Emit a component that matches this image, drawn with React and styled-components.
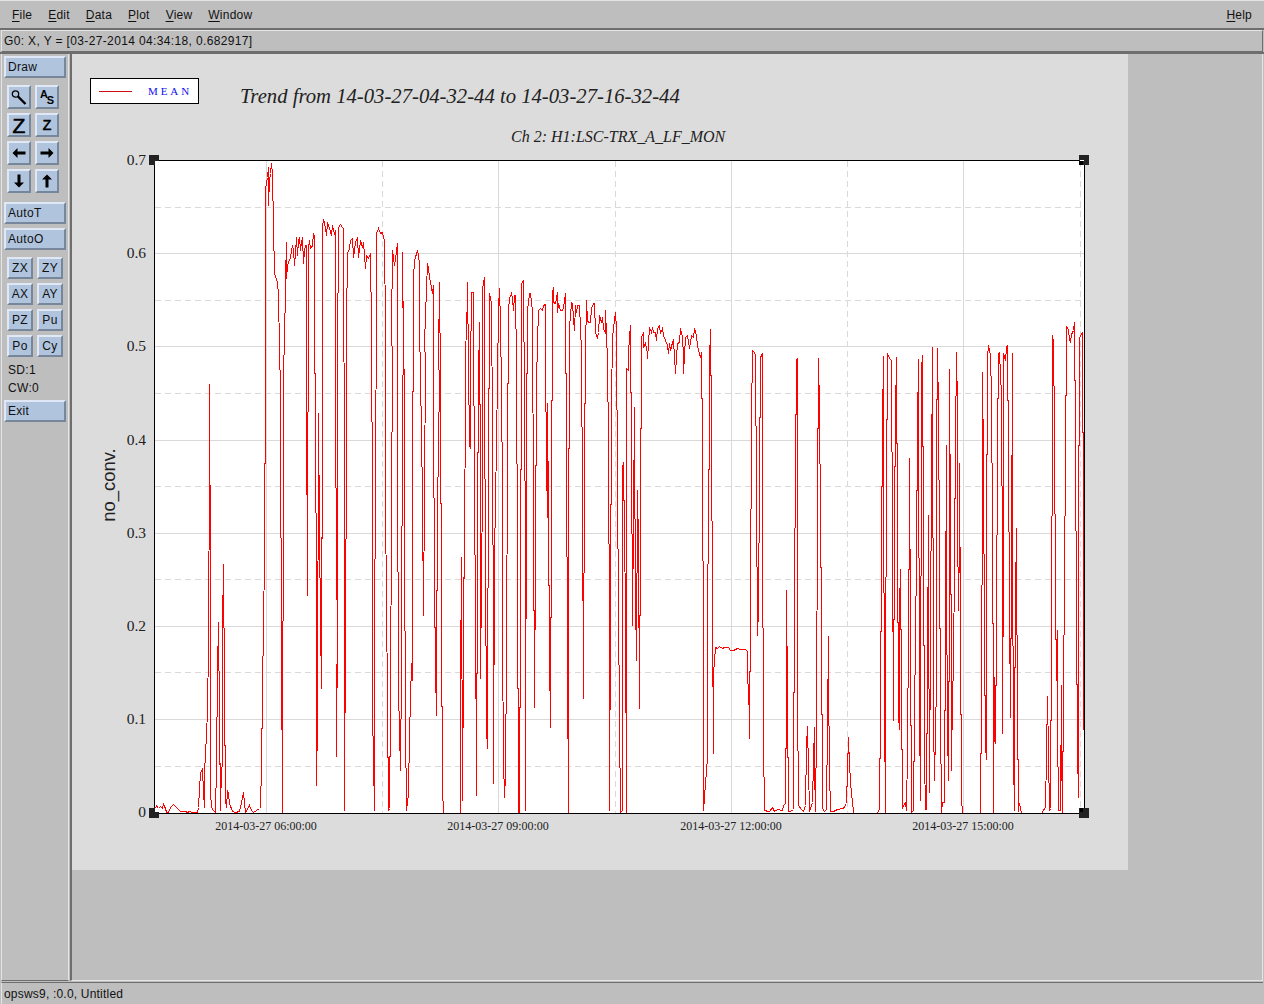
import React from 'react';
import styled, { createGlobalStyle } from 'styled-components';

const Global = createGlobalStyle`
  html, body { margin: 0; padding: 0; background: #bebebe; }
  * { box-sizing: border-box; }
`;

const O = { z3: [140, 150, 1 / 3], z9: [150, 360, 1 / 3], z7: [450, 260, 1 / 3], z10: [450, 360, 1 / 3], z11: [740, 340, 1 / 3], z8: [1000, 300, 0.338] };
const TRACE = [
  ['z9', '15,1345 18,1334 24,1345 30,1338 36,1345 39,1333 45,1345 48,1356 54,1356 60,1342 70,1333 78,1340 90,1352 105,1352 110,1356 118,1352 125,1356 140,1356 145,1340 148,1285 150,1240 155,1225 158,1295 161,1340 163,1235 167,1125 170,1050 172,1080 174,830 176,325 178,72 179,660 181,1295 184,1340 190,1350 196,1356 199,1215 202,930 205,785 207,1068 209,1350 211,1210 213,1280 215,1165 217,800 220,612 222,985 224,1320 228,1340 231,1290 235,1300 238,1330 245,1352 255,1356 268,1352 274,1325 278,1296 281,1325 285,1356 297,1335 303,1350 310,1356 327,1345 330,1340 333,1215 335,1000 338,780 341,610 344,30'],
  ['z3', '376,115 381,80 383,50 385,165 388,90 391,70 394,40 397,70 400,230 402,370 405,378 411,395 413,435 417,595 419,720'],
  ['z9', '390,212 392,850 396,1358 396,850 398,720 400,0'],
  ['z3', '431,600 435,385 437,275 438,385 440,345 444,335 450,320 456,285 460,300 463,345 466,305 469,260 472,315 475,270 478,260 480,300 484,275 487,260 490,340 491,300 494,285 497,285 497,545 499,720'],
  ['z9', '472,705'],
  ['z3', '505,295 507,270 510,295 513,290 516,285 519,250 522,258 523,670'],
  ['z9', '496,40 497,860 499,1275 501,1070 505,160 508,515 510,780 512,985 513,780 515,300'],
  ['z3', '545,225 548,210 552,215 556,235 558,255 562,218 565,225 568,235 572,255 576,225 579,240 582,250 584,240 584,485'],
  ['z9', '556,100 558,645 560,790 559,1190 562,645'],
  ['z3', '592,635 595,230 600,222 605,230 608,235 609,550 611,720'],
  ['z9', '583,1350 585,790 587,300'],
  ['z3', '618,520 622,310 627,295 630,270 635,265 640,320 645,275 650,262 655,320 660,270 665,290 670,275 675,355 678,315 685,325 690,310 692,535'],
  ['z9', '665,450 667,1050 671,1350 673,1040 675,180 679,0'],
  ['z3', '709,250 715,235 720,250 727,245 730,260 733,270 735,528'],
  ['z9', '706,430 710,1020 713,1350 718,1345 720,1045 723,445 725,0'],
  ['z3', '753,540 757,300 760,320 763,345 765,325 770,280 772,277'],
  ['z9', '742,260 745,990 749,1230 752,930 757,90 759,0'],
  ['z3', '787,305 789,590 792,720'],
  ['z9', '762,530 765,1085 768,1350 775,1300 778,1125 782,910 785,960 787,190 790,0'],
  ['z3', '820,380 823,330 830,300 833,315 836,340 838,510 841,700'],
  ['z9', '813,200 817,430 820,765 822,395 824,0'],
  ['z3', '853,580 858,415 860,340 865,350 868,380 872,410 876,430 878,405'],
  ['z9', '848,150 851,665 855,930 857,1065 859,945 862,450 866,60'],
  ['z3', '895,625 898,395 900,690'],
  ['z9', '871,60 874,780 877,1285 878,1362 929,1362 930,975 932,590 934,770 936,1135 937,1320 938,900 941,420 944,235'],
  ['z7', '46,285 50,110 52,65 54,305 58,555 61,565 61,330 64,95 68,95 69,235 71,630'],
  ['z10', '74,830 77,1195 79,1305 80,597 84,-30'],
  ['z7', '86,430 87,185 90,675'],
  ['z10', '91,955 95,375 95,-210 99,-235 103,-250 103,100 107,1105 110,1165 112,1010 115,380 118,-200 122,-170 125,195 128,905 130,1268 133,580 136,430 140,60 144,-155 148,-215 150,-115 153,85 155,395 157,840 160,1195 163,1312 165,1245 168,885 172,300 175,-150 178,-185 183,-200 187,-185 190,-150 192,-195 196,-195 199,0 201,600 204,1356 208,1356 210,740 212,-50 214,-230 218,-240 220,-150 222,35 226,670 226,1350 229,240 232,-150 236,-200 240,-200 244,-175 247,-150 250,455 253,1040 255,585 258,65 262,-55 265,-150 270,-155 275,-150 278,-165 285,-168 285,-5 287,310 290,470 292,130 295,470 298,875 301,1100 303,460 305,-200 308,-220 310,-175 315,-170 317,-185 320,-205 322,-145 325,-170 330,-150 335,-150 340,-160 343,-180 346,-200 348,275 351,900 355,1355 355,660 358,-100 362,-175 367,-170 370,-125 373,-90 376,-165 379,-145 382,-165 388,-165 392,-30 396,420 398,1015 401,295 404,-30 407,-180 410,-120 413,-115 420,-115 424,-155 428,-170 433,-170 436,-85 440,-65 444,-85 448,-135 452,-115 456,-130 460,-95 464,-80 466,-150 470,0 474,240 477,855 478,1350 480,760 484,120 487,-65 490,-95 495,-145 498,-95 502,383 506,1085 509,1355 515,1350 517,320 520,305 525,740 527,1355 528,25 533,30 535,-20 538,-70 541,-105 543,290 546,740 547,795 551,140 553,230 556,715 559,900 562,390 565,555 568,1043 570,500 572,-70 578,-85 580,-40 585,-50 590,-20 592,-5 595,-50 597,-100 602,-85 605,-100 610,-85 615,-85 618,-60 622,-95 626,-105 630,-80 635,-95 640,-75 645,-60 650,-45 653,-22 656,-50 660,-30 665,-55 670,-60 675,40 678,-10 680,-50 688,-55 690,-95 695,-70 698,-15 700,40 703,-15 705,-70 712,-75 718,-35 722,-75 730,-70 733,-95 737,-75 742,-45 745,-30 749,-10 753,-25 755,250 758,940 760,1350 770,1190 772,755 776,190 778,0 780,-93 784,180 786,775 788,1180 790,940 795,862 800,865 808,858 815,865 822,860 835,860 840,870 850,870 860,865 870,868 885,868 890,872 892,935 896,1065 898,1135 900,745 903,170 905,-30 910,-28 915,-18 917,405 921,825 925,750 927,360 930,-10 935,-20 937,455 940,1140 943,1350 955,1352'],
  ['z11', '88,1412 97,1400 103,1412 110,1408 125,1410 130,1395 135,1390 137,1070 139,750 141,1080 143,1412 150,1412 160,1408 162,735 167,60 170,55 172,1055 175,1395 182,1408 190,1412 195,1395 198,1218 202,1158 204,1285 206,1412 215,1385 218,1260 221,1160 223,1280 225,1412 229,1160 232,485 235,55 238,210 242,835 245,1405 252,1412 258,1408 260,1150 263,888 265,1020 268,1285 270,1412 280,1412 290,1408 310,1405 318,1390 322,1290 325,1190 328,1275 332,1365 336,1378 340,1422 412,1422 417,1405 420,1115 423,640 426,245 428,48 430,415 432,1095 434,1415 436,990 439,445 442,40 447,55 452,60 455,600 458,1140 461,545 465,220 468,50 471,565 474,1125 476,1168 478,805 481,688 484,1045 486,1405 490,1395 494,1385 497,1410 500,1230 503,865 506,520 508,355 510,885 512,1415 520,1410 523,1125 527,650 531,255 533,58 536,1245 538,740 540,1380 542,85 546,45 548,575 552,1250 554,1408 558,1408 560,970 563,525 565,720 568,1355 573,400 575,55 577,20 580,1150 583,1320 587,1030 589,340 592,25 595,220 598,610 600,1115 603,1415 607,1385 613,1385 615,855 617,315 619,710 622,1170 624,1320 626,745 628,88 630,590 632,930 634,1290 637,1050 640,995 644,305 648,35 650,205 652,540 654,810 656,590 658,370 660,865 662,1375 667,1422 720,1422 724,1075 725,415 727,95 729,365 733,910 735,1215 737,1258 739,660 741,50 745,15 749,45 752,165 755,565 758,1130 760,1415 763,1010 765,1210 767,870 770,315 773,40 778,35 782,165 785,690 787,1180 789,610 790,40 794,60 797,20 800,15 803,340 807,800 809,1130 812,665 815,40 817,570 819,1255 821,1410 823,1200 825,775 827,565 829,670 831,1090 833,1412 835,1400 838,1388 841,1405 843,1422'],
  ['z8', '127,1522 130,1505 134,1502 138,1340 142,1172 144,1340 147,1510 150,1503 152,1000 155,300 157,105 160,120 162,380 165,880 168,1125 170,975 172,1240 174,1510 180,1510 182,1140 184,1325 186,1515 190,1170 194,470 197,100 199,78 204,85 208,115 211,125 214,100 218,90 222,65 224,405 228,945 230,1325 233,1470 235,770 238,110 242,100 245,95 248,680 250,1270'],
];

const tracePoints = TRACE.flatMap(([frame, s]) => {
  const [ox, oy, k] = O[frame];
  return s.split(' ').map((p) => {
    const [x, y] = p.split(',').map(Number);
    return `${Math.round(ox + x / 3) + 0.5},${Math.min(813.5, Math.round(oy + y * k) + 0.5)}`;
  });
}).join(' ');

const Page = styled.div`
  width: 1264px;
  height: 1004px;
  display: flex;
  flex-direction: column;
  background: #bebebe;
  overflow: hidden;
  font-family: "Liberation Sans", Arial, sans-serif;
  font-size: 12px;
  letter-spacing: 0.3px;
  color: #111;
`;
const MenuBar = styled.div`
  height: 30px;
  flex: none;
  display: flex;
  align-items: center;
  padding: 0 12px;
  gap: 16px;
  border-top: 1px solid #e4e4e4;
  border-bottom: 2px solid #6e6e6e;
  letter-spacing: 0.22px;
`;
const MenuItem = styled.span`
  margin-left: ${(p) => (p.$push ? 'auto' : 0)};
  line-height: 14px;
  & u { text-underline-offset: 2px; text-decoration-thickness: 1px; }
`;
const InfoBar = styled.div`
  height: 22px;
  flex: none;
  margin: 0 1px;
  padding: 0 2px;
  display: flex;
  align-items: center;
  border-top: 1px solid #e4e4e4;
  border-left: 1px solid #e4e4e4;
  border-right: 1px solid #6e6e6e;
  border-bottom: 1px solid #6e6e6e;
  letter-spacing: 0.36px;
`;
const Body = styled.div`
  flex: 1;
  min-height: 0;
  display: flex;
  border-top: 2px solid #6e6e6e;
`;
const SidePanel = styled.div`
  width: 68px;
  margin-left: 1px;
  flex: none;
  display: flex;
  flex-direction: column;
  padding: 2px 2px 0 2px;
  border-left: 1px solid #e4e4e4;
  border-right: 1px solid #e4e4e4;
  border-bottom: 1px solid #6e6e6e;
`;
const Button = styled.div`
  height: 22px;
  width: 62px;
  flex: none;
  background: #b0c4de;
  border-style: solid;
  border-width: 2px;
  border-color: #dfe8f4 #76869b #76869b #dfe8f4;
  display: flex;
  align-items: center;
  padding-left: 2px;
  margin-top: ${(p) => p.$mt || 0}px;
  line-height: 14px;
`;
const ToolGrid = styled.div`
  display: grid;
  grid-template-columns: 24px 24px;
  grid-auto-rows: 24px;
  gap: 4px;
  margin: 7px 0 9px 3px;
`;
const SmallGrid = styled.div`
  display: grid;
  grid-template-columns: 26px 26px;
  grid-auto-rows: 22px;
  gap: 4px;
  margin: 7px 0 0 3px;
`;
const SmallButton = styled(Button)`
  width: 26px;
  height: 22px;
  padding: 0;
  justify-content: center;
`;
const ToolButton = styled(Button)`
  width: 24px;
  height: 24px;
  padding: 0;
  justify-content: center;
  color: #000;
`;
const Letter = styled.span`
  font-weight: 400;
  font-size: ${(p) => p.$size}px;
  line-height: 1;
  color: #000;
  letter-spacing: 0;
  -webkit-text-stroke: 0.6px #000;
`;
const AsGlyph = styled.span`
  display: flex;
  width: 14px;
  height: 17px;
  justify-content: space-between;
  font-weight: 700;
  font-size: 11px;
  line-height: 11px;
  letter-spacing: 0;
  color: #000;
  & span:last-child { align-self: flex-end; margin-left: -2px; }
`;
const Counter = styled.div`
  height: 18px;
  line-height: 18px;
  padding-left: 4px;
  margin-top: ${(p) => p.$mt || 0}px;
`;
const Main = styled.div`
  flex: 1;
  min-width: 0;
  border-left: 2px solid #6e6e6e;
  border-right: 1px solid #e4e4e4;
  border-bottom: 1px solid #e4e4e4;
  margin: 0 1px;
`;
const CanvasCard = styled.div`
  width: 1056px;
  height: 816px;
  background: #dcdcdc;
  display: flex;
  flex-direction: column;
`;
const Header = styled.div`
  height: 50px;
  flex: none;
  display: flex;
  align-items: flex-start;
  padding: 24px 0 0 18px;
`;
const Legend = styled.div`
  width: 109px;
  height: 26px;
  background: #fff;
  border: 1px solid #000;
  display: flex;
  align-items: center;
  padding-left: 8px;
`;
const LegendLine = styled.span`
  width: 33px;
  height: 1px;
  background: #d01010;
`;
const LegendLabel = styled.span`
  margin-left: 16px;
  font-family: "Liberation Serif", "Times New Roman", serif;
  font-size: 11px;
  letter-spacing: 2.9px;
  color: #1010f0;
`;
const Title = styled.div`
  margin-left: 41px;
  margin-top: 5px;
  font-family: "Liberation Serif", "Times New Roman", serif;
  font-style: italic;
  font-size: 20.7px;
  line-height: 26px;
  letter-spacing: 0;
  color: #222;
  white-space: nowrap;
`;
const Subtitle = styled.div`
  box-sizing: content-box;
  height: 18px;
  padding: 24px 0 0 439px;
  font-family: "Liberation Serif", "Times New Roman", serif;
  font-style: italic;
  font-size: 16px;
  line-height: 18px;
  letter-spacing: 0;
  color: #222;
  white-space: nowrap;
`;
const Chart = styled.svg`
  display: block;
  margin-top: 2px;
  flex: none;
  letter-spacing: 0;
  & text { fill: #222; }
`;
const TickY = styled.text`
  font-family: "Liberation Serif", "Times New Roman", serif;
  font-size: 15.5px;
  text-anchor: end;
`;
const TickX = styled.text`
  font-family: "Liberation Serif", "Times New Roman", serif;
  font-size: 12px;
  text-anchor: middle;
`;
const AxisLabel = styled.text`
  font-family: "Liberation Sans", Arial, sans-serif;
  font-size: 18.4px;
  text-anchor: middle;
`;
const StatusBar = styled.div`
  height: 22px;
  flex: none;
  margin: 1px 1px 0;
  padding: 0 2px;
  display: flex;
  align-items: center;
  border-top: 1px solid #6e6e6e;
  border-left: 1px solid #e4e4e4;
  letter-spacing: 0.2px;
`;

const Mnemonic = ({ text }) => <><u>{text[0]}</u>{text.slice(1)}</>;

const Magnifier = () => (
  <svg width="18" height="18" viewBox="0 0 18 18">
    <circle cx="5.5" cy="6" r="3.2" fill="none" stroke="#000" strokeWidth="1.3" />
    <path d="M8 8.5 L15.5 16" stroke="#000" strokeWidth="2.4" />
  </svg>
);
const Arrow = ({ dir }) => {
  const r = { left: 0, right: 180, up: 90, down: 270 }[dir];
  return (
    <svg width="16" height="16" viewBox="0 0 16 16">
      <path transform={`rotate(${r} 8 8)`} d="M1.5 8 L6.5 3 V6.5 H14.5 V9.5 H6.5 V13 Z" fill="#000" />
    </svg>
  );
};

const HANDLES = [[149, 155], [1079, 155], [149, 808], [1079, 808]];
const ys = [160, 253, 346, 440, 533, 626, 719, 812];
const dashY = [207, 300, 393, 486, 579, 672, 766];
const solidX = [266, 498, 731, 963];
const dashX = [382, 615, 847, 1080];
const dates = [
  [266, '2014-03-27 06:00:00'],
  [498, '2014-03-27 09:00:00'],
  [731, '2014-03-27 12:00:00'],
  [963, '2014-03-27 15:00:00'],
];

const Plot = () => (
  <Chart width="1056" height="698" viewBox="72 148 1056 698">
    <rect x="154.5" y="160.5" width="930" height="653" fill="#fff" />
    <g stroke="#d9d9d9" strokeWidth="1" shapeRendering="crispEdges">
      {ys.slice(1, 7).map((y) => <line key={y} x1="155" x2="1084" y1={y + 0.5} y2={y + 0.5} />)}
      {solidX.map((x) => <line key={x} x1={x + 0.5} x2={x + 0.5} y1="161" y2="813" />)}
      {dashY.map((y) => <line key={y} x1="155" x2="1084" y1={y + 0.5} y2={y + 0.5} strokeDasharray="6 4" />)}
      {dashX.map((x) => <line key={x} x1={x + 0.5} x2={x + 0.5} y1="161" y2="813" strokeDasharray="6 4" />)}
    </g>
    <polyline points={tracePoints} fill="none" stroke="#ff0000" strokeWidth="1" shapeRendering="crispEdges" />
    <rect x="154.5" y="160.5" width="930" height="653" fill="none" stroke="#000" strokeWidth="1" shapeRendering="crispEdges" />
    <g shapeRendering="crispEdges">
      {HANDLES.map(([x, y]) => <rect key={`${x}-${y}`} x={x} y={y} width="10" height="10" fill="#222" />)}
      <rect x="155" y="161" width="4" height="4" fill="#fff" />
      <rect x="1079" y="161" width="4" height="4" fill="#000" />
      <rect x="1080" y="160" width="4" height="1" fill="#fff" />
      <rect x="155" y="808" width="4" height="4" fill="#fff" />
      <rect x="1080" y="808" width="3" height="4" fill="#000" />
    </g>
    {['0.7', '0.6', '0.5', '0.4', '0.3', '0.2', '0.1', '0'].map((t, i) => (
      <TickY key={t} x="146" y={ys[i] + 5}>{t}</TickY>
    ))}
    {dates.map(([x, t]) => <TickX key={x} x={x} y="830">{t}</TickX>)}
    <AxisLabel transform="translate(115 485) rotate(-90)">no_conv.</AxisLabel>
  </Chart>
);

export default function App() {
  return (
    <Page>
      <Global />
      <MenuBar>
        {['File', 'Edit', 'Data', 'Plot', 'View', 'Window'].map((m) => (
          <MenuItem key={m}><Mnemonic text={m} /></MenuItem>
        ))}
        <MenuItem $push><Mnemonic text="Help" /></MenuItem>
      </MenuBar>
      <InfoBar>G0: X, Y = [03-27-2014 04:34:18, 0.682917]</InfoBar>
      <Body>
        <SidePanel>
          <Button>Draw</Button>
          <ToolGrid>
            <ToolButton><Magnifier /></ToolButton>
            <ToolButton><AsGlyph><span>A</span><span>S</span></AsGlyph></ToolButton>
            <ToolButton><Letter $size={21}>Z</Letter></ToolButton>
            <ToolButton><Letter $size={14}>Z</Letter></ToolButton>
            <ToolButton><Arrow dir="left" /></ToolButton>
            <ToolButton><Arrow dir="right" /></ToolButton>
            <ToolButton><Arrow dir="down" /></ToolButton>
            <ToolButton><Arrow dir="up" /></ToolButton>
          </ToolGrid>
          <Button>AutoT</Button>
          <Button $mt={4}>AutoO</Button>
          <SmallGrid>
            {['ZX', 'ZY', 'AX', 'AY', 'PZ', 'Pu', 'Po', 'Cy'].map((l) => <SmallButton key={l}>{l}</SmallButton>)}
          </SmallGrid>
          <Counter $mt={4}>SD:1</Counter>
          <Counter>CW:0</Counter>
          <Button $mt={3}>Exit</Button>
        </SidePanel>
        <Main>
          <CanvasCard>
            <Header>
              <Legend><LegendLine /><LegendLabel>MEAN</LegendLabel></Legend>
              <Title>Trend from 14-03-27-04-32-44 to 14-03-27-16-32-44</Title>
            </Header>
            <Subtitle>Ch 2: H1:LSC-TRX_A_LF_MON</Subtitle>
            <Plot />
          </CanvasCard>
        </Main>
      </Body>
      <StatusBar>opsws9, :0.0, Untitled</StatusBar>
    </Page>
  );
}
